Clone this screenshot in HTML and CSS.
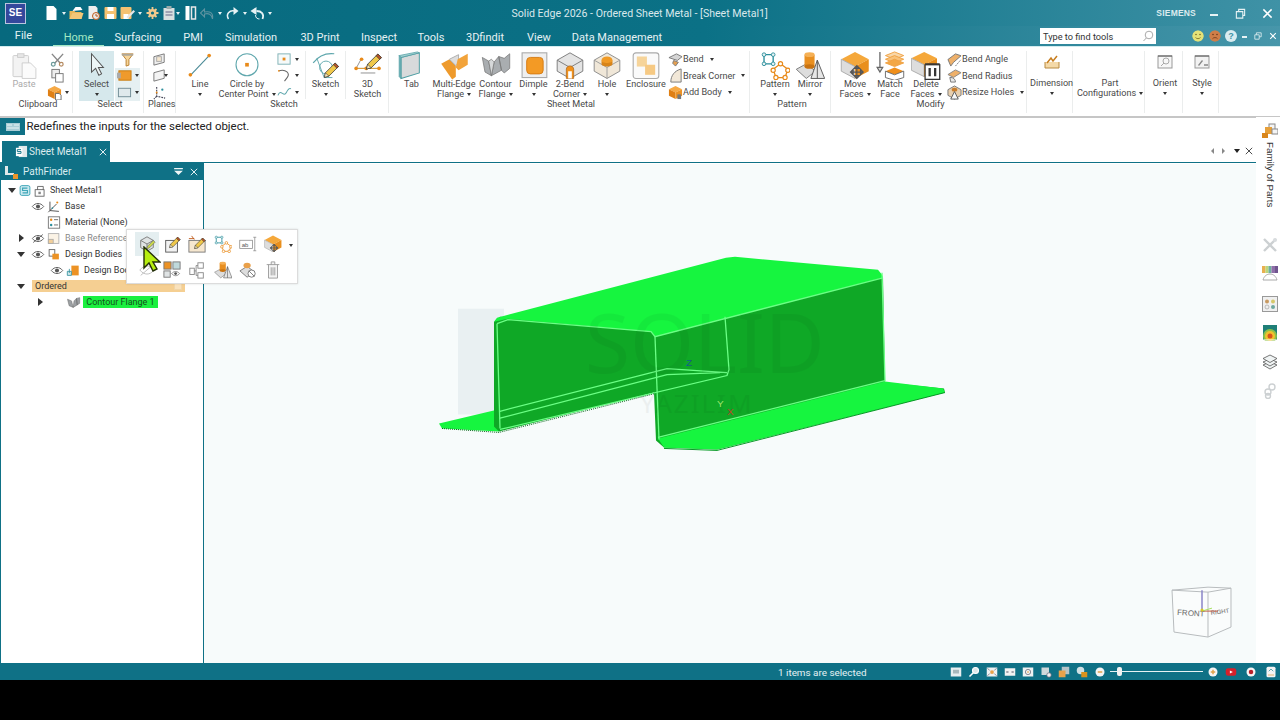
FILE: index.html
```html
<!DOCTYPE html>
<html lang="en">
<head>
<meta charset="utf-8">
<title>Solid Edge 2026 - Ordered Sheet Metal - [Sheet Metal1]</title>
<link rel="stylesheet" href="styles.css">
</head>
<body>
<svg class="defs" xmlns="http://www.w3.org/2000/svg">
  <symbol id="paste" viewBox="0 0 32 32"><rect x="4" y="5" width="17" height="23" rx="1" fill="#f3f3f3" stroke="#ccc"/><rect x="9" y="3" width="7" height="4" fill="#e6e6e6" stroke="#ccc"/><path d="M14 13h9l6 6v11H14z" fill="#fbfbfb" stroke="#ccc"/></symbol>
  <symbol id="select" viewBox="0 0 32 32"><path d="M10 3V23l4.500-4 3.500 7.500 3-1.500-3.500-7H23z" fill="#eef6f7" stroke="#555" stroke-width="1.100"/></symbol>
  <symbol id="line" viewBox="0 0 32 32"><path d="M6 26 26 5" stroke="#4a8a96" stroke-width="1.200"/><circle cx="5.500" cy="26" r="2" fill="#e88a1a"/><circle cx="26" cy="5" r="2" fill="#e88a1a"/></symbol>
  <symbol id="circle" viewBox="0 0 32 32"><circle cx="16" cy="15" r="12" fill="none" stroke="#5fa7ad" stroke-width="1.200"/><rect x="14" y="13" width="4" height="4" fill="#e88a1a"/></symbol>
  <symbol id="pencil" viewBox="0 0 32 32"><path d="M5 30l2-8L24 5l6 6-17 17z" fill="#f0c84a" stroke="#333" stroke-width="1.300"/><path d="M24 5l6 6-3 3-6-6z" fill="#b5552a" stroke="#333"/><path d="M5 30l2-8 6 6z" fill="#f6e6b8" stroke="#333"/></symbol>
  <symbol id="sketch" viewBox="0 0 32 32"><path d="M2 13C8 5 16 2 25 3" fill="none" stroke="#5fa7ad" stroke-width="1.300"/><path d="M6 8l8 21h9" fill="none" stroke="#5fa7ad"/><circle cx="16" cy="18" r="7" fill="none" stroke="#5fa7ad"/><use href="#pencil" x="11" y="10" width="20" height="20"/></symbol>
  <symbol id="sketch3d" viewBox="0 0 32 32"><path d="M3 19H28M8 24H24M3 19l6-11" fill="none" stroke="#8a8a8a"/><path d="M3 19h25" stroke="#e0a030"/><circle cx="3" cy="19" r="2" fill="#e88a1a"/><circle cx="14" cy="19" r="2" fill="#e88a1a"/><circle cx="28" cy="19" r="2" fill="#e88a1a"/><circle cx="9" cy="9" r="2" fill="#e88a1a"/><use href="#pencil" x="11" y="0" width="21" height="21"/></symbol>
  <symbol id="tab" viewBox="0 0 32 32"><path d="M4 7 24 2V24L4 30z" fill="#d8dadb" stroke="#4f9ea3" stroke-width="1.100"/><path d="M4 7 2 5 22 1l2 1z" fill="#a8d3d4" stroke="#4f9ea3" stroke-width=".8"/><path d="M4 7 2 5V28l2 2z" fill="#6fb3b7" stroke="#4f9ea3" stroke-width=".8"/></symbol>
  <symbol id="multiedge" viewBox="0 0 32 32"><path d="M2 14 11 9l7 7v12l-4 3z" fill="#ee9a2c"/><path d="M11 9l10-5v9l-3 3z" fill="#ddd" stroke="#aaa"/><path d="M20 9l11-6V15l-10 6-3-3z" fill="#f2a33a"/></symbol>
  <symbol id="contour" viewBox="0 0 32 32"><path d="M1 7 8 11l3 16-7-4zM11 27l3-15 5-6 3 15zM19 6l3 15 3 3 6-5V3l-6 5z" fill="#a9adb0" stroke="#777" stroke-width=".8"/><path d="M8 11l3 16 3-15-3-3z" fill="#d6d8d9" stroke="#777" stroke-width=".8"/></symbol>
  <symbol id="dimple" viewBox="0 0 32 32"><rect x="3" y="2" width="27" height="27" fill="#efefef" stroke="#aaa" stroke-width="1.200"/><rect x="8" y="7" width="18" height="18" rx="4" fill="#f39a25" stroke="#d47a10"/></symbol>
  <symbol id="twobend" viewBox="0 0 32 32"><path d="M16 2 30 10V22L16 30 2 22V10z" fill="#e4e4e4" stroke="#777"/><path d="M2 10 16 18 30 10M16 18V30" fill="none" stroke="#777"/><path d="M12 30V20c0-5 8-5 8 0V30z" fill="#f0911c" stroke="#a65c10" stroke-width=".7"/><path d="M14 30V22h4v8z" fill="#fff"/></symbol>
  <symbol id="hole" viewBox="0 0 32 32"><path d="M16 2 30 10V22L16 30 2 22V10z" fill="#f0e7d8" stroke="#888"/><path d="M2 10 16 18 30 10M16 18V30" fill="none" stroke="#999"/><ellipse cx="16" cy="10" rx="6" ry="4" fill="#f09a25"/><path d="M10 10v4c0 4 12 4 12 0v-4c0 4-12 4-12 0" fill="#d88418"/></symbol>
  <symbol id="enclosure" viewBox="0 0 32 32"><rect x="2" y="2" width="28" height="28" rx="3" fill="#fafafa" stroke="#aaa" stroke-width="1.200"/><rect x="6" y="6" width="11" height="11" fill="#f6d49a"/><rect x="15" y="15" width="11" height="11" fill="#f6c983"/></symbol>
  <symbol id="pattern" viewBox="0 0 32 32"><path d="M4 4h10v10H4z" fill="none" stroke="#2d8f9c" stroke-width="1.500"/><g fill="#e6f2f3" stroke="#2d8f9c"><circle cx="4" cy="4" r="2"/><circle cx="14" cy="4" r="2"/><circle cx="4" cy="14" r="2"/><circle cx="14" cy="14" r="2"/></g><path d="M22 14 30 20 27 29H17L14 20z" fill="none" stroke="#e88a1a" stroke-width="1.400"/><g fill="#fff" stroke="#e88a1a" stroke-width="1.300"><circle cx="22" cy="14" r="2.300"/><circle cx="30" cy="21" r="2.300"/><circle cx="27" cy="29" r="2.300"/><circle cx="17" cy="29" r="2.300"/><circle cx="14" cy="21" r="2.300"/></g></symbol>
  <symbol id="mirror" viewBox="0 0 32 32"><path d="M1 20 12 14 22 22 12 30z" fill="#ddd" stroke="#777"/><rect x="10" y="4" width="11" height="13" fill="#e88f20"/><ellipse cx="15.500" cy="4" rx="5.500" ry="2.500" fill="#f5b055"/><ellipse cx="15.500" cy="17" rx="5.500" ry="2.500" fill="#c97310"/><path d="M24 10 17 30h15z" fill="#e6e6e6" stroke="#555"/><path d="M24 10V30" stroke="#555"/></symbol>
  <symbol id="move" viewBox="0 0 32 32"><path d="M16 1 31 9 16 17 1 9z" fill="#f5a83b"/><path d="M1 9 16 17V30L1 22z" fill="#ddd" stroke="#aaa"/><path d="M31 9 16 17V30L31 22z" fill="#e98f1d"/><path d="M18 16v14M11 23h14M18 16l-3 3h6zM18 30l-3-3h6zM11 23l3-3v6zM25 23l-3-3v6z" stroke="#555" fill="#777" stroke-width="1.300"/></symbol>
  <symbol id="match" viewBox="0 0 32 32"><path d="M5 1V18M2 18h6l-3 5z" stroke="#666" fill="#ddd" stroke-width="1.400"/><g fill="none" stroke="#f0a040"><path d="M21 1 31 5 21 9 11 5z" fill="#f9d7a8"/><path d="M21 5 31 9 21 13 11 9z" fill="#f8c27a"/><path d="M21 9 31 13 21 17 11 13z" fill="#f3a745"/></g><path d="M21 18 31 22 21 26 11 22z" fill="#f08f1b"/><path d="M11 22V29l10 3 10-3V22L21 26z" fill="#fff" stroke="#666"/></symbol>
  <symbol id="deletef" viewBox="0 0 32 32"><path d="M14 1 28 8 14 15 0 8z" fill="#f5a83b"/><path d="M0 8 14 15V28L0 21z" fill="#ddd" stroke="#aaa"/><path d="M28 8 14 15V28L28 21z" fill="#e98f1d"/><rect x="15" y="15" width="16" height="16" fill="#fff" stroke="#333" stroke-width="1.400"/><path d="M20 18.500V27.500M26 18.500V27.500" stroke="#333" stroke-width="2.500"/><path d="M15 14h16" stroke="#333" stroke-width="1.500"/></symbol>

  <symbol id="scissors" viewBox="0 0 16 16"><path d="M2 2l9 10M14 2 5 12" stroke="#888" stroke-width="1.500"/><circle cx="3.500" cy="13" r="2" fill="none" stroke="#6a9a9a" stroke-width="1.300"/><circle cx="12" cy="13" r="2" fill="none" stroke="#b58a60" stroke-width="1.300"/></symbol>
  <symbol id="copy" viewBox="0 0 16 16"><rect x="2" y="1.500" width="8" height="9" fill="#eee" stroke="#777"/><rect x="6" y="6" width="8" height="9" fill="#fff" stroke="#777"/></symbol>
  <symbol id="cube" viewBox="0 0 16 16"><path d="M8 1l7 3.500-7 3.500-7-3.500z" fill="#f6a945"/><path d="M1 4.500 8 8v7l-7-3.500z" fill="#df7f14"/><path d="M15 4.500 8 8v7l7-3.500z" fill="#ec9224"/></symbol>
  <symbol id="cubedoc" viewBox="0 0 16 16"><use href="#cube"/><path d="M9 9h4l2 2v5H9z" fill="#fff" stroke="#666"/></symbol>
  <symbol id="funnel" viewBox="0 0 16 16"><path d="M2 2h12L9.500 8v6L6.500 15V8z" fill="#f7d59a" stroke="#b77e2d"/><path d="M2 2h12v2H2z" fill="#b0a898"/></symbol>
  <symbol id="selorange" viewBox="0 0 16 16"><rect x="2" y="3" width="13" height="10" fill="#ef9a2c" stroke="#c97c10"/><rect x="0" y="5" width="4" height="6" fill="#aaa"/></symbol>
  <symbol id="rectsel" viewBox="0 0 16 16"><rect x="1.500" y="3.500" width="13" height="9" fill="#dfe9ec" stroke="#718c96"/></symbol>
  <symbol id="plane1" viewBox="0 0 16 16"><path d="M2 5 13 2v9L2 14z" fill="#eee" stroke="#777"/><rect x="5" y="5" width="5" height="5" fill="#f5e7d0" stroke="#aaa"/></symbol>
  <symbol id="plane2" viewBox="0 0 16 16"><path d="M2 5 13 2v9L2 14z" fill="#f4f4f4" stroke="#777"/></symbol>
  <symbol id="axes" viewBox="0 0 16 16"><path d="M5 2v10l9 2M5 12l-3 3" fill="none" stroke="#445" stroke-width="1.200" stroke-dasharray="2 1"/><circle cx="5" cy="8" r="1" fill="#e88a1a"/><circle cx="11" cy="5" r="1.200" fill="#2d8f9c"/></symbol>
  <symbol id="sk1" viewBox="0 0 16 16"><rect x="1" y="2" width="13" height="11" fill="#f5fafa" stroke="#7fb0b5"/><rect x="6" y="6" width="3" height="3" fill="#e88a1a"/></symbol>
  <symbol id="sk2" viewBox="0 0 16 16"><path d="M2 3c8-2 12 3 9 7l-3 4" fill="none" stroke="#666" stroke-width="1.100"/><circle cx="2" cy="3" r="1" fill="#e88a1a"/></symbol>
  <symbol id="sk3" viewBox="0 0 16 16"><path d="M1 11c3-8 6 3 9-3s4-4 5-4" fill="none" stroke="#5fa7ad" stroke-width="1.100"/></symbol>
  <symbol id="bend" viewBox="0 0 16 16"><path d="M1 6 9 2l6 3-5 4z" fill="#d5d5d5" stroke="#777"/><path d="M6 9l5 2-3 4-3-3z" fill="#e6a050" stroke="#777"/></symbol>
  <symbol id="breakc" viewBox="0 0 16 16"><path d="M3 15C3 8 7 3 14 1V15z" fill="#f2e8d8" stroke="#777"/></symbol>
  <symbol id="addbody" viewBox="0 0 16 16"><use href="#cube"/><path d="M10 10h4v5h-4z" fill="#777"/></symbol>
  <symbol id="bangle" viewBox="0 0 16 16"><path d="M1 8 9 2l6 2-8 7-3 4z" fill="#eeb06a" stroke="#777"/><path d="M9 15 15 8" stroke="#777" stroke-dasharray="2 1"/></symbol>
  <symbol id="bradius" viewBox="0 0 16 16"><path d="M1 7 9 2l6 3-8 5z" fill="#eeb06a" stroke="#888"/><path d="M3 10c4 0 6 2 6 5H4z" fill="#e8e8e8" stroke="#777"/></symbol>
  <symbol id="rholes" viewBox="0 0 16 16"><path d="M8 1 15 5v6L8 15 1 11V5z" fill="#e8cfae" stroke="#777"/><ellipse cx="8" cy="5" rx="3" ry="2" fill="#c97d2b"/><path d="M8 7 4 15h8z" fill="#f7f7f7" stroke="#555"/></symbol>
  <symbol id="dimension" viewBox="0 0 16 16"><path d="M1 8v6h14V8" fill="#f4d9a8" stroke="#b98a40"/><path d="M3 9l4-5 2 3 4-5" fill="none" stroke="#c77d1e" stroke-width="1.500"/></symbol>
  <symbol id="orient" viewBox="0 0 16 16"><rect x="1" y="2" width="14" height="12" fill="#f7f7f7" stroke="#999"/><path d="M1 2h14" stroke="#555"/><circle cx="9" cy="7" r="3" fill="none" stroke="#aaa"/><path d="M7 9 4 12" stroke="#aaa"/></symbol>
  <symbol id="style" viewBox="0 0 16 16"><rect x="1" y="2" width="14" height="12" fill="#f2f2f2" stroke="#999"/><path d="M1 2h14" stroke="#555"/><path d="M4 11l4-5 1 1-4 5z" fill="#888"/><path d="M10 11h4" stroke="#555"/></symbol>

  <symbol id="q-doc" viewBox="0 0 16 16"><path d="M3 1h7l3 3v11H3z" fill="#fff"/></symbol>
  <symbol id="q-open" viewBox="0 0 16 16"><path d="M1 6h5l1 1h6v7H1z" fill="#e9b75a"/><path d="M4 6 7 2h5l2 3" fill="#fff"/><path d="M1 14l3-6h11l-2 6z" fill="#f3c778"/></symbol>
  <symbol id="q-clock" viewBox="0 0 16 16"><path d="M3 1h7l2 2v11H3z" fill="#eee"/><circle cx="10.500" cy="11" r="3.500" fill="#e8e8e8" stroke="#c05a1a"/><path d="M10.500 9v2h2" stroke="#c05a1a" fill="none"/></symbol>
  <symbol id="q-save" viewBox="0 0 16 16"><rect x="2" y="2" width="12" height="12" rx="1" fill="#f5c271"/><rect x="5" y="2" width="6" height="4" fill="#fff"/><rect x="4.500" y="9" width="7" height="5" fill="#fff"/></symbol>
  <symbol id="q-saveas" viewBox="0 0 16 16"><rect x="1" y="2" width="11" height="12" rx="1" fill="#f5c271"/><rect x="4" y="9" width="5" height="5" fill="#fff"/><path d="M7 12l7-7 1.500 1.500-7 7z" fill="#e8e8e8"/></symbol>
  <symbol id="q-gear" viewBox="0 0 16 16"><path d="M8 2v12M2 8h12M4 4l8 8M12 4l-8 8" stroke="#f2c98c" stroke-width="1.800"/><circle cx="8" cy="8" r="4" fill="#f2c98c"/><circle cx="8" cy="8" r="1.600" fill="#0b6f83"/></symbol>
  <symbol id="q-clip" viewBox="0 0 16 16"><rect x="2" y="3" width="11" height="12" fill="#d8e0e0"/><rect x="5" y="1" width="5" height="3" fill="#9aa"/><path d="M4 7h7M4 10h7" stroke="#668"/></symbol>
  <symbol id="q-door" viewBox="0 0 16 16"><path d="M3 1h4v14H3z" fill="#fff"/><path d="M9 2h4v12H9z" fill="none" stroke="#e8e8e8" stroke-width="1.500"/></symbol>
  <symbol id="q-undo" viewBox="0 0 16 16"><path d="M13 14c1-6-2-8-8-7V4L1 8l4 4V9c4-1 7 0 8 5z" fill="none" stroke="#5e93a0" stroke-width="1.100"/></symbol>
  <symbol id="q-redo" viewBox="0 0 16 16"><path d="M4 14C1 9 5 5 10 6" fill="none" stroke="#e6f2f4" stroke-width="1.500"/><path d="M9 2l5 4-5 4z" fill="#e6f2f4"/></symbol>
  <symbol id="q-undo2" viewBox="0 0 16 16"><path d="M13 14c2-5-1-8-6-8" fill="none" stroke="#e6f2f4" stroke-width="1.800"/><path d="M7 2 1 6l6 4z" fill="#e6f2f4"/><path d="M6 10c0 3 2 4 4 4" fill="none" stroke="#e6f2f4"/></symbol>

  <symbol id="eye" viewBox="0 0 16 16"><path d="M1 8c4-5 10-5 14 0-4 5-10 5-14 0z" fill="#fff" stroke="#555" stroke-width="1.100"/><circle cx="8" cy="8" r="2.500" fill="#555"/></symbol>
  <symbol id="eyeoff" viewBox="0 0 16 16"><use href="#eye"/><path d="M2 13 14 3" stroke="#555"/></symbol>
  <symbol id="tree-s" viewBox="0 0 16 16"><rect x="2" y="2" width="12" height="12" rx="2" fill="#cdeaf0" stroke="#3fa6b8" stroke-width="1.200"/><path d="M11 5H5v3h6v3H5" fill="none" stroke="#3fa6b8" stroke-width="1.400"/></symbol>
  <symbol id="tree-lock" viewBox="0 0 16 16"><rect x="2" y="7" width="11" height="8" fill="#fff" stroke="#555"/><path d="M5 7V3h7v4" fill="none" stroke="#555"/><rect x="6" y="9.500" width="3" height="3" fill="#888"/></symbol>
  <symbol id="tree-base" viewBox="0 0 16 16"><path d="M3 2v11l11 1M3 13 1 15M3 13 11 5" fill="none" stroke="#444" stroke-width="1.100"/><circle cx="12" cy="3" r="1.300" fill="#e88a1a"/><circle cx="6" cy="10" r="1" fill="#2d8f9c"/></symbol>
  <symbol id="tree-mat" viewBox="0 0 16 16"><rect x="1" y="1" width="14" height="14" fill="#fff" stroke="#666"/><circle cx="4.500" cy="4.500" r="1.500" fill="#e88a1a"/><circle cx="4.500" cy="11" r="1.500" fill="#2d8f9c"/><path d="M8 4.500h5M8 11h5" stroke="#555"/></symbol>
  <symbol id="tree-ref" viewBox="0 0 16 16"><rect x="1" y="2" width="13" height="12" fill="#fbf3e6" stroke="#aaa"/><rect x="1" y="9" width="6" height="5" fill="#f2cf9a" stroke="#aaa"/></symbol>
  <symbol id="tree-bodies" viewBox="0 0 16 16"><rect x="2" y="2" width="7" height="8" fill="#fff" stroke="#555"/><rect x="6" y="7" width="8" height="7" fill="#ec9224"/></symbol>
  <symbol id="tree-body" viewBox="0 0 16 16"><rect x="6" y="2" width="9" height="12" fill="#ec9224"/><path d="M1 9h5v5H1z" fill="#cfe7ea" stroke="#2d8f9c"/><path d="M3.500 6v5M1 8" stroke="#2d8f9c"/></symbol>
  <symbol id="tree-flange" viewBox="0 0 16 16"><path d="M0 4 5 6l2 8-5-2zM7 14l1-8 3-3 1 8zM11 3l1 8 3-2V2z" fill="#9ca0a3" stroke="#666" stroke-width=".6"/></symbol>

  <symbol id="m-edit" viewBox="0 0 20 20"><path d="M3 6 10 2l7 4v8l-7 4-7-4z" fill="#dfe3e4" stroke="#777"/><path d="M3 6l7 4 7-4M10 10v8" fill="none" stroke="#777"/><path d="M9 16l2-4 6-6 2 2-6 6z" fill="#c9d84a" stroke="#666" stroke-width=".7"/></symbol>
  <symbol id="m-sketch" viewBox="0 0 20 20"><rect x="3" y="6" width="13" height="13" fill="#f2f2f2" stroke="#555"/><use href="#pencil" x="5" y="0" width="15" height="15"/></symbol>
  <symbol id="m-dyn" viewBox="0 0 20 20"><rect x="1" y="6" width="18" height="13" fill="#f6e7cf" stroke="#777"/><path d="M1 4h6M4 1l3 4" stroke="#c05a1a"/><use href="#pencil" x="5" y="1" width="15" height="15"/></symbol>
  <symbol id="m-pat" viewBox="0 0 20 20"><use href="#pattern"/></symbol>
  <symbol id="m-ab" viewBox="0 0 24 20"><rect x="1" y="5" width="17" height="11" fill="#fff" stroke="#888"/><text x="3.500" y="14" class="m-abtxt">ab</text><path d="M21 1v18M19 1h4M19 19h4" stroke="#888"/></symbol>
  <symbol id="m-move" viewBox="0 0 20 20"><use href="#move"/></symbol>
  <symbol id="m-hide" viewBox="0 0 20 20"><path d="M2 10c5-6 11-6 16 0-5 6-11 6-16 0z" fill="none" stroke="#bbb"/><path d="M3 16 17 4" stroke="#bbb"/></symbol>
  <symbol id="m-show" viewBox="0 0 20 20"><rect x="1" y="1" width="8" height="8" fill="#ec9224" stroke="#777"/><rect x="11" y="1" width="8" height="8" fill="#bfd9dc" stroke="#777"/><rect x="1" y="11" width="7" height="7" fill="#dfe3e4" stroke="#777"/><use href="#eye" x="8" y="9" width="12" height="10"/></symbol>
  <symbol id="m-rel" viewBox="0 0 20 20"><rect x="2" y="8" width="5" height="7" fill="#fff" stroke="#888"/><rect x="11" y="2" width="6" height="6" fill="#fff" stroke="#888"/><rect x="11" y="13" width="6" height="6" fill="#fff" stroke="#888"/><path d="M7 11h2V5h2M9 11v5h2" fill="none" stroke="#888"/></symbol>
  <symbol id="m-mirror" viewBox="0 0 20 20"><use href="#mirror"/></symbol>
  <symbol id="m-sup" viewBox="0 0 20 20"><path d="M1 11 9 6l8 6-8 6z" fill="#ddd" stroke="#777"/><ellipse cx="9" cy="5" rx="4" ry="3" fill="#e9a04a"/><circle cx="14" cy="14" r="4" fill="#fff" stroke="#777"/><path d="M11 11l6 6" stroke="#777"/></symbol>
  <symbol id="m-del" viewBox="0 0 20 20"><path d="M3 4h14M5 4v15h10V4M8 4V1h4v3" fill="#f4f4f4" stroke="#999"/><path d="M8 7v9M10 7v9M12 7v9" stroke="#999"/></symbol>

  <symbol id="r-tools" viewBox="0 0 16 16"><path d="M2 14 14 2M2 2l12 12" stroke="#ccd0d2" stroke-width="2.400"/><circle cx="13" cy="3" r="2" fill="#d8dcde"/></symbol>
  <symbol id="r-rain" viewBox="0 0 16 16"><rect x="0" y="0" width="3.500" height="7" fill="#e8b050"/><rect x="3.500" y="0" width="3" height="7" fill="#bcd57a"/><rect x="6.500" y="0" width="3" height="7" fill="#6fb0a0"/><rect x="9.500" y="0" width="3.500" height="7" fill="#8f6fa8"/><rect x="13" y="0" width="3" height="7" fill="#70558f"/><path d="M1 14c2-8 12-8 14 0z" fill="#fff" stroke="#aaa"/></symbol>
  <symbol id="r-grid" viewBox="0 0 16 16"><rect x=".5" y=".5" width="15" height="15" fill="#f0f0f0" stroke="#999"/><circle cx="5" cy="5.500" r="2" fill="#c89a62"/><circle cx="11" cy="5.500" r="2" fill="#d6c86a"/><circle cx="5" cy="11" r="2" fill="#eee" stroke="#999" stroke-width=".6"/><circle cx="11" cy="11" r="2" fill="#6fa8a0"/></symbol>
  <symbol id="r-heat" viewBox="0 0 16 16"><rect x="1" y="0" width="14" height="15" fill="#1f7f78"/><circle cx="8" cy="11" r="7" fill="#8ec24a"/><circle cx="8" cy="11" r="5" fill="#f2c030"/><circle cx="8" cy="11" r="2.500" fill="#d9541e"/><path d="M1 15h14" stroke="#fff"/></symbol>
  <symbol id="r-stack" viewBox="0 0 16 16"><g fill="#f0f4f4" stroke="#555" stroke-width=".8"><path d="M8 8l7 3-7 4-7-4z"/><path d="M8 5l7 3-7 4-7-4z"/><path d="M8 1l7 3.500-7 4-7-4z"/></g></symbol>
  <symbol id="r-chain" viewBox="0 0 16 16"><g fill="none" stroke="#ccd0d2" stroke-width="1.400"><circle cx="10" cy="4" r="3"/><circle cx="6" cy="9" r="3"/><circle cx="6" cy="13" r="2.500"/></g></symbol>
  <symbol id="r-family" viewBox="0 0 16 16"><rect x="7" y="1" width="6" height="6" fill="#f4f4f4" stroke="#888"/><rect x="3" y="4" width="7" height="7" fill="#e6a03a"/><rect x="10" y="6" width="6" height="5" fill="#f4f4f4" stroke="#888"/><rect x="0" y="10" width="6" height="5" fill="#d9861c"/></symbol>

  <symbol id="f-happy" viewBox="0 0 12 12"><circle cx="6" cy="6" r="5.800" fill="#e3e278"/><circle cx="4" cy="4.500" r=".8" fill="#7a6a20"/><circle cx="8" cy="4.500" r=".8" fill="#7a6a20"/><path d="M3.500 7.500c1 1.500 4 1.500 5 0" fill="none" stroke="#7a6a20" stroke-width=".8"/></symbol>
  <symbol id="f-sad" viewBox="0 0 12 12"><circle cx="6" cy="6" r="5.800" fill="#cf7e48"/><circle cx="4" cy="4.500" r=".8" fill="#70381a"/><circle cx="8" cy="4.500" r=".8" fill="#70381a"/><path d="M3.500 8.700c1-1.500 4-1.500 5 0" fill="none" stroke="#70381a" stroke-width=".8"/></symbol>

  <symbol id="s-view" viewBox="0 0 16 16"><rect x="1" y="2" width="14" height="12" fill="#e8eef0"/><rect x="4" y="5" width="8" height="5" fill="#a8b8bc"/></symbol>
  <symbol id="s-zoom" viewBox="0 0 16 16"><circle cx="10" cy="6" r="4" fill="#dfe8ea" stroke="#fff" stroke-width="1.500"/><path d="M7 9l-5 5" stroke="#fff" stroke-width="2.200"/></symbol>
  <symbol id="s-fit" viewBox="0 0 16 16"><rect x="1" y="2" width="14" height="12" fill="#eef2f2"/><circle cx="8" cy="8" r="2.500" fill="#e8a24a"/><path d="M2 3l3 3M14 3l-3 3M2 13l3-3M14 13l-3-3" stroke="#667"/></symbol>
  <symbol id="s-flat" viewBox="0 0 16 16"><rect x="1" y="3" width="14" height="10" fill="#f2f2f2"/><path d="M3 8h3M10 8h3" stroke="#556" stroke-width="1.500"/></symbol>
  <symbol id="s-rot" viewBox="0 0 16 16"><rect x="1" y="2" width="14" height="12" fill="#eef2f2"/><circle cx="8" cy="8" r="3.500" fill="none" stroke="#667"/><circle cx="8" cy="8" r="1" fill="#e88a1a"/></symbol>
  <symbol id="s-look" viewBox="0 0 16 16"><rect x="2" y="2" width="10" height="10" fill="#cfd8da"/><circle cx="12" cy="12" r="3" fill="#f0f0f0" stroke="#667"/></symbol>
  <symbol id="s-pan" viewBox="0 0 16 16"><rect x="5" y="1" width="10" height="10" fill="#b5c4c8"/><rect x="1" y="6" width="9" height="9" fill="#e8a24a"/></symbol>
  <symbol id="s-glob" viewBox="0 0 16 16"><circle cx="6" cy="6" r="5" fill="#cfe0e4"/><rect x="7" y="8" width="8" height="7" fill="#d9921e"/></symbol>
  <symbol id="s-minus" viewBox="0 0 16 16"><circle cx="8" cy="8" r="6" fill="#f4f4f4"/><path d="M5 8h6" stroke="#e0a24a" stroke-width="2"/></symbol>
  <symbol id="s-plus" viewBox="0 0 16 16"><circle cx="8" cy="8" r="6" fill="#f4f4f4"/><path d="M5 8h6M8 5v6" stroke="#e0a24a" stroke-width="2"/></symbol>
  <symbol id="s-yt" viewBox="0 0 16 16"><rect x="1" y="3" width="14" height="10" rx="3" fill="#d6202a"/><path d="M6.500 6l4 2-4 2z" fill="#fff"/></symbol>
  <symbol id="s-rec" viewBox="0 0 16 16"><circle cx="8" cy="8" r="6" fill="#f4f4f4"/><circle cx="8" cy="8" r="3" fill="#b8202a"/></symbol>
  <symbol id="s-up" viewBox="0 0 16 16"><rect x="2" y="1" width="12" height="14" rx="2" fill="#f4f4f4"/><path d="M5 7l3-3 3 3" fill="none" stroke="#2d8f9c"/><path d="M4 12h8" stroke="#e0a24a"/></symbol>
</svg>

<div class="app">
  <header class="titlebar">
    <div class="logo">SE</div>
    <div class="qat">
      <svg class="q"><use href="#q-doc"/></svg><i class="caret-w"></i>
      <svg class="q"><use href="#q-open"/></svg>
      <svg class="q"><use href="#q-clock"/></svg>
      <svg class="q"><use href="#q-save"/></svg>
      <svg class="q"><use href="#q-saveas"/></svg><i class="caret-w"></i>
      <svg class="q"><use href="#q-gear"/></svg>
      <svg class="q"><use href="#q-clip"/></svg><i class="caret-w tight"></i>
      <svg class="q"><use href="#q-door"/></svg>
      <svg class="q"><use href="#q-undo"/></svg><i class="caret-w"></i>
      <svg class="q"><use href="#q-redo"/></svg><i class="caret-w"></i>
      <svg class="q"><use href="#q-undo2"/></svg><i class="caret-w"></i>
    </div>
    <div class="doc-title">Solid Edge 2026 - Ordered Sheet Metal - [Sheet Metal1]</div>
    <div class="win-group">
      <span class="siemens">SIEMENS</span>
      <span class="win win-min"></span>
      <svg class="win-restore" viewBox="0 0 12 12"><path d="M1.500 4h7v7h-7zM4 4V1.500h6.500V8H8.500" fill="none" stroke="#e6f2f4" stroke-width="1.200"/></svg>
      <svg class="win-close" viewBox="0 0 12 12"><path d="M1.500 1.500l9 9M10.500 1.500l-9 9" stroke="#fff" stroke-width="1.600"/></svg>
    </div>
  </header>

  <nav class="tabbar">
    <span class="tab tab-file">File</span>
    <span class="tab tab-home">Home</span>
    <span class="tab t-surf">Surfacing</span>
    <span class="tab t-pmi">PMI</span>
    <span class="tab t-sim">Simulation</span>
    <span class="tab t-3d">3D Print</span>
    <span class="tab t-insp">Inspect</span>
    <span class="tab t-tools">Tools</span>
    <span class="tab t-find">3Dfindit</span>
    <span class="tab t-view">View</span>
    <span class="tab t-dm">Data Management</span>
    <div class="tab-right">
      <div class="search"><span>Type to find tools</span>
        <svg class="search-ico" viewBox="0 0 12 12"><circle cx="7" cy="5" r="3.800" fill="none" stroke="#aaa"/><path d="M4.300 8 1.500 11" stroke="#aaa"/></svg></div>
      <svg class="face face-y"><use href="#f-happy"/></svg>
      <svg class="face face-o"><use href="#f-sad"/></svg>
      <span class="help">?</span>
      <span class="mini-min"></span>
      <svg class="mini" viewBox="0 0 10 10"><path d="M1 3.500h5.500V9H1zM3 3.500V1h6v5H6.500" fill="none" stroke="#e6f2f4"/></svg>
      <svg class="mini" viewBox="0 0 10 10"><path d="M1.500 1.500l7 7M8.500 1.500l-7 7" stroke="#fff" stroke-width="1.300"/></svg>
    </div>
  </nav>

  <section class="ribbon">
    <div class="group g-clip">
      <div class="items">
        <div class="lg w36 ml6 muted"><svg class="ico"><use href="#paste"/></svg><span>Paste</span></div>
        <div class="col w31">
          <div class="sm"><svg class="s"><use href="#scissors"/></svg></div>
          <div class="sm"><svg class="s"><use href="#copy"/></svg></div>
          <div class="sm"><svg class="s"><use href="#cubedoc"/></svg><i class="caret"></i></div>
        </div>
      </div>
      <div class="glabel">Clipboard</div>
    </div>
    <div class="group g-sel">
      <div class="items">
        <div class="lg w36 ml6 sel-on"><svg class="ico"><use href="#select"/></svg><span>Select</span><i class="caret"></i></div>
        <div class="col w25">
          <div class="sm"><svg class="s"><use href="#funnel"/></svg></div>
          <div class="sm on"><svg class="s"><use href="#selorange"/></svg><i class="caret"></i></div>
          <div class="sm on"><svg class="s"><use href="#rectsel"/></svg><i class="caret"></i></div>
        </div>
      </div>
      <div class="glabel">Select</div>
    </div>
    <div class="group g-planes">
      <div class="items">
        <div class="col w31">
          <div class="sm"><svg class="s"><use href="#plane1"/></svg></div>
          <div class="sm"><svg class="s"><use href="#plane2"/></svg><i class="caret tiny"></i></div>
          <div class="sm"><svg class="s"><use href="#axes"/></svg></div>
        </div>
      </div>
      <div class="glabel">Planes</div>
    </div>
    <div class="group g-sketch">
      <div class="items">
        <div class="lg w48"><svg class="ico"><use href="#line"/></svg><span>Line</span><i class="caret"></i></div>
        <div class="lg w46"><svg class="ico"><use href="#circle"/></svg><span>Circle by</span><span>Center Point <i class="caret in"></i></span></div>
        <div class="col w36 sub">
          <div class="sm"><svg class="s"><use href="#sk1"/></svg><i class="caret"></i></div>
          <div class="sm"><svg class="s"><use href="#sk2"/></svg><i class="caret"></i></div>
          <div class="sm"><svg class="s"><use href="#sk3"/></svg><i class="caret"></i></div>
        </div>
        <div class="lg w40 sub"><svg class="ico"><use href="#sketch"/></svg><span>Sketch</span><i class="caret"></i></div>
        <div class="lg w43"><svg class="ico"><use href="#sketch3d"/></svg><span>3D</span><span>Sketch</span></div>
      </div>
      <div class="glabel">Sketch</div>
    </div>
    <div class="group g-sheet">
      <div class="items">
        <div class="lg w45"><svg class="ico"><use href="#tab"/></svg><span>Tab</span></div>
        <div class="lg w40"><svg class="ico"><use href="#multiedge"/></svg><span>Multi-Edge</span><span>Flange <i class="caret in"></i></span></div>
        <div class="lg w43"><svg class="ico"><use href="#contour"/></svg><span>Contour</span><span>Flange <i class="caret in"></i></span></div>
        <div class="lg w33"><svg class="ico"><use href="#dimple"/></svg><span>Dimple</span><i class="caret"></i></div>
        <div class="lg w40"><svg class="ico"><use href="#twobend"/></svg><span>2-Bend</span><span>Corner <i class="caret in"></i></span></div>
        <div class="lg w34"><svg class="ico"><use href="#hole"/></svg><span>Hole</span><i class="caret"></i></div>
        <div class="lg w44"><svg class="ico"><use href="#enclosure"/></svg><span>Enclosure</span></div>
        <div class="col grow">
          <div class="sm txt"><svg class="s"><use href="#bend"/></svg><span>Bend</span><i class="caret gap"></i></div>
          <div class="sm txt"><svg class="s"><use href="#breakc"/></svg><span>Break Corner</span><i class="caret gap"></i></div>
          <div class="sm txt"><svg class="s"><use href="#addbody"/></svg><span>Add Body</span><i class="caret gap"></i></div>
        </div>
      </div>
      <div class="glabel">Sheet Metal</div>
    </div>
    <div class="group g-pat">
      <div class="items">
        <div class="lg w42 ml4"><svg class="ico"><use href="#pattern"/></svg><span>Pattern</span><i class="caret"></i></div>
        <div class="lg w28"><svg class="ico"><use href="#mirror"/></svg><span>Mirror</span><i class="caret"></i></div>
      </div>
      <div class="glabel">Pattern</div>
    </div>
    <div class="group g-mod">
      <div class="items">
        <div class="lg w40 ml4"><svg class="ico"><use href="#move"/></svg><span>Move</span><span>Faces <i class="caret in"></i></span></div>
        <div class="lg w30"><svg class="ico"><use href="#match"/></svg><span>Match</span><span>Face</span></div>
        <div class="lg w42"><svg class="ico"><use href="#deletef"/></svg><span>Delete</span><span>Faces <i class="caret in"></i></span></div>
        <div class="col grow">
          <div class="sm txt"><svg class="s"><use href="#bangle"/></svg><span>Bend Angle</span></div>
          <div class="sm txt"><svg class="s"><use href="#bradius"/></svg><span>Bend Radius</span></div>
          <div class="sm txt"><svg class="s"><use href="#rholes"/></svg><span>Resize Holes</span><i class="caret gap"></i></div>
        </div>
      </div>
      <div class="glabel">Modify</div>
    </div>
    <div class="group g-dim tool"><div class="items"><div class="lg grow"><svg class="tool-ico"><use href="#dimension"/></svg><span>Dimension</span><i class="caret"></i></div></div></div>
    <div class="group g-part tool"><div class="items"><div class="lg grow"><div class="tool-gap"></div><span>Part</span><span>Configurations <i class="caret in"></i></span></div></div></div>
    <div class="group g-orient tool"><div class="items"><div class="lg grow"><svg class="tool-ico"><use href="#orient"/></svg><span>Orient</span><i class="caret"></i></div></div></div>
    <div class="group g-style tool"><div class="items"><div class="lg grow"><svg class="tool-ico"><use href="#style"/></svg><span>Style</span><i class="caret"></i></div></div></div>
  </section>

  <div class="prompt">
    <div class="prompt-ico"><svg viewBox="0 0 14 8"><rect width="14" height="8" fill="#a9cdd6"/><path d="M1 2h5M8 2h5M1 5h12" stroke="#e9f3f5"/></svg></div>
    <div class="prompt-text">Redefines the inputs for the selected object.</div>
  </div>

  <div class="docstrip">
    <div class="doctab">
      <svg class="doctab-ico" viewBox="0 0 14 14"><rect x="4" y="1" width="9" height="12" fill="#dfe8ea"/><rect x="1" y="3" width="7" height="9" fill="#fff"/><path d="M6.500 5H2.500v2h4v2h-4" fill="none" stroke="#0f7186"/></svg>
      <span>Sheet Metal1</span>
      <svg class="doctab-x" viewBox="0 0 10 10"><path d="M1 1l8 8M9 1 1 9" stroke="#fff" stroke-width="1.100"/></svg>
    </div>
    <div class="docnav">
      <i class="tri-l"></i><i class="tri-r"></i><i class="tri-d"></i>
      <svg class="docnav-x" viewBox="0 0 10 10"><path d="M1 1l8 8M9 1 1 9" stroke="#333" stroke-width="1.100"/></svg>
    </div>
  </div>

  <main class="main">
    <aside class="pathfinder">
      <div class="pf-head">
        <svg class="pf-ico" viewBox="0 0 14 14"><path d="M1 1h3v7h6v2H1z" fill="#dfe8ea"/><rect x="9" y="9" width="5" height="5" fill="#e8952a"/></svg>
        <span>PathFinder</span>
        <svg class="pf-funnel" viewBox="0 0 10 8"><path d="M0 0h10v1.500H0zM0 3h10L5 8z" fill="#eef6f7"/></svg>
        <svg class="pf-x" viewBox="0 0 10 10"><path d="M1 1l8 8M9 1 1 9" stroke="#fff" stroke-width="1.100"/></svg>
      </div>
      <div class="tree">
        <div class="row pl3"><i class="tw-d"></i><svg class="n narrow"><use href="#tree-s"/></svg><svg class="n"><use href="#tree-lock"/></svg><span class="lbl lbl-root">Sheet Metal1</span></div>
        <div class="row pl30"><svg class="n"><use href="#eye"/></svg><svg class="n"><use href="#tree-base"/></svg><span class="lbl">Base</span></div>
        <div class="row pl46"><svg class="n"><use href="#tree-mat"/></svg><span class="lbl">Material (None)</span></div>
        <div class="row pl14"><i class="tw-r"></i><svg class="n"><use href="#eyeoff"/></svg><svg class="n"><use href="#tree-ref"/></svg><span class="lbl grey">Base Reference Planes</span></div>
        <div class="row pl14"><i class="tw-d"></i><svg class="n"><use href="#eye"/></svg><svg class="n"><use href="#tree-bodies"/></svg><span class="lbl">Design Bodies</span></div>
        <div class="row pl49"><svg class="n"><use href="#eye"/></svg><svg class="n"><use href="#tree-body"/></svg><span class="lbl">Design Body</span></div>
        <div class="row pl14"><i class="tw-d"></i><div class="ordered"><span>Ordered</span><i class="ord-box"></i></div></div>
        <div class="row pl32"><i class="tw-r"></i><svg class="n flange"><use href="#tree-flange"/></svg><span class="lbl hit">Contour Flange 1</span></div>
      </div>
    </aside>

    <div class="viewport">
      <svg class="scene" viewBox="204 163 1052 500" preserveAspectRatio="none">
        <rect x="458" y="308" width="46" height="106" fill="#e9f0f2"/>
        <polygon points="439,423 498,409 499,431 442,428" fill="#16f53f"/>
        <polygon points="494,321 500,316 651,329 655,336 883,276 885,382 944,388 945,392 717,449 664,447 656,440 654,392 499,431 494,426" fill="#0fa826"/>
        <polygon points="658,438 885,381 943,388 945,392 717,449 664,447" fill="#16f53f"/>
        <polygon points="494,321 497,317 726,257 735,256 878,269 882,274 883,277 655,336 651,331 508,318" fill="#16f53f"/>
        <g fill="none" stroke="#6bff85" stroke-width="1.300">
          <path d="M497 323 508 319 651 331 655 336 883 277"/>
          <path d="M497 323 500 428M882 272 885 381"/>
          <path d="M655 336 659 439"/>
          <path d="M499 411 667 368 727 372M499 418 667 374 720 372 M500 429 727 375 729 369 725 316"/>
          <path d="M658 437 885 380"/>
        </g>
        <path d="M442 428 499 432 655 393" fill="none" stroke="#07661a" stroke-width="1" stroke-dasharray="1 1"/>
        <path d="M664 448 717 450 945 392" fill="none" stroke="#079a25" stroke-width="1"/>
        <text x="585" y="372" class="wm wm-big">SOLID</text>
        <text x="640" y="413" class="wm wm-small">YAZILIM</text>
        <text x="686" y="365" class="axis ax-z">Z</text>
        <text x="717" y="406" class="axis ax-y">Y</text>
        <text x="727" y="415" class="axis ax-x">X</text>
        <g class="navcube">
          <path d="M1172 590 1208 587 1231 588 1231 627 1208 637 1174 632z" fill="#fafcfc" stroke="#b8bcbe"/>
          <path d="M1172 590 1208 592 1231 588M1208 592 1208 637" fill="none" stroke="#b8bcbe"/>
          <text x="1177" y="615" class="cube-f" transform="rotate(3 1177 615)">FRONT</text>
          <text x="1211" y="615" class="cube-r" transform="rotate(-8 1211 615)">RIGHT</text>
          <path d="M1202 590V611" stroke="#8a84c8" stroke-width="1.500"/>
          <path d="M1202 611H1218" stroke="#c05a40"/>
          <path d="M1202 611 1212 608" stroke="#a8e060"/>
          <circle cx="1202" cy="610" r="1.500" fill="#d8c820"/>
        </g>
      </svg>
    </div>

    <aside class="dock">
      <div class="dock-head"><svg class="d"><use href="#r-family"/></svg><span class="dock-label">Family of Parts</span></div>
      <div class="dock-icons">
        <svg class="d"><use href="#r-tools"/></svg>
        <svg class="d"><use href="#r-rain"/></svg>
        <svg class="d"><use href="#r-grid"/></svg>
        <svg class="d"><use href="#r-heat"/></svg>
        <svg class="d"><use href="#r-stack"/></svg>
        <svg class="d"><use href="#r-chain"/></svg>
      </div>
    </aside>
  </main>

  <footer class="status">
    <span class="status-msg">1 items are selected</span>
    <div class="status-tools">
      <svg class="st"><use href="#s-view"/></svg>
      <svg class="st"><use href="#s-zoom"/></svg>
      <svg class="st"><use href="#s-fit"/></svg>
      <svg class="st"><use href="#s-flat"/></svg>
      <svg class="st"><use href="#s-rot"/></svg>
      <svg class="st"><use href="#s-look"/></svg>
      <svg class="st"><use href="#s-pan"/></svg>
      <svg class="st"><use href="#s-glob"/></svg>
      <svg class="st"><use href="#s-minus"/></svg>
      <div class="slider"><i class="thumb"></i></div>
      <svg class="st"><use href="#s-plus"/></svg>
      <svg class="st"><use href="#s-yt"/></svg>
      <svg class="st wide"><use href="#s-rec"/></svg>
      <svg class="st"><use href="#s-up"/></svg>
    </div>
  </footer>
  <div class="blackbar"></div>

  <div class="popup">
    <div class="pop-cell pop-on"><svg class="p"><use href="#m-edit"/></svg></div>
    <div class="pop-cell"><svg class="p"><use href="#m-sketch"/></svg></div>
    <div class="pop-cell"><svg class="p"><use href="#m-dyn"/></svg></div>
    <div class="pop-cell"><svg class="p"><use href="#m-pat"/></svg></div>
    <div class="pop-cell"><svg class="p"><use href="#m-ab"/></svg></div>
    <div class="pop-cell"><svg class="p"><use href="#m-move"/></svg></div>
    <div class="pop-cell pop-caret"><i class="caret"></i></div>
    <div class="pop-cell"><svg class="p"><use href="#m-hide"/></svg></div>
    <div class="pop-cell"><svg class="p"><use href="#m-show"/></svg></div>
    <div class="pop-cell"><svg class="p"><use href="#m-rel"/></svg></div>
    <div class="pop-cell"><svg class="p"><use href="#m-mirror"/></svg></div>
    <div class="pop-cell"><svg class="p"><use href="#m-sup"/></svg></div>
    <div class="pop-cell"><svg class="p"><use href="#m-del"/></svg></div>
  </div>
  <svg class="cursor" viewBox="0 0 18 26"><path d="M1 1V22L6 17 10 25 14 23 10 16H17z" fill="#b6ee10" stroke="#243008" stroke-width="1.400"/></svg>
</div>
</body>
</html>
```
FILE: styles.css
```css
* { box-sizing: border-box; }
html, body { margin: 0; height: 100%; }
body { font-family: Roboto, "Noto Sans", sans-serif; overflow: hidden; background: #000; }
.defs { display: none; }
i { display: block; }
.app { position: relative; width: 1280px; height: 720px; display: flex; flex-direction: column; background: #fff; }

/* title + tabs */
.titlebar { height: 26px; display: flex; align-items: center; padding-left: 5px; color: #dcebee; background: linear-gradient(90deg, #07697e 0%, #0b7186 55%, #3f92a6 100%); }
.logo { width: 21px; height: 21px; background: #34489c; border: 1.500px solid #b9c6de; color: #fff; font: bold 10px/18px "Liberation Sans", sans-serif; text-align: center; }
.qat { display: flex; align-items: center; margin-left: 16.500px; width: 243px; flex: none; }
.q { width: 17px; height: 16px; padding: 0 .5px; flex: none; }
.caret-w { width: 8px; height: 3px; flex: none; position: relative; }
.caret-w::after { content: ""; display: block; margin: 0 auto; width: 0; height: 0; border-left: 2.500px solid transparent; border-right: 2.500px solid transparent; border-top: 3px solid #e6f2f4; }
.tight { margin-left: -4px; }
.doc-title { margin-left: 226px; font-size: 10.600px; white-space: nowrap; color: #d9e8ec; }
.win-group { margin-left: auto; display: flex; align-items: center; }
.siemens { font: bold 8.500px "Liberation Sans", sans-serif; color: #dcebee; letter-spacing: .2px; }
.win-min { display: block; width: 8px; height: 2px; background: #e6f2f4; margin: 3px 0 0 14px; }
.win-restore { width: 11px; height: 11px; margin-left: 17px; }
.win-close { width: 11px; height: 11px; margin: 0 7px 0 16px; }

.tabbar { height: 20px; display: flex; align-items: center; color: #e6f2f4; font-size: 11px; background: linear-gradient(90deg, #07697e 0%, #0b7186 55%, #4796aa 100%); }
.tab { flex: none; text-align: center; height: 20px; line-height: 23px; white-space: nowrap; }
.tab-file { width: 53px; padding-left: 0; margin-left: -3px; margin-right: 3px; line-height: 20px; }
.tab-home { width: 51px; color: #a4e9c4; border-bottom: 1px solid #a4e9c4; }
.t-surf { width: 68px; } .t-pmi { width: 42px; } .t-sim { width: 74px; } .t-3d { width: 64px; }
.t-insp { width: 54px; } .t-tools { width: 50px; } .t-find { width: 58px; } .t-view { width: 50px; } .t-dm { width: 106px; }
.tab-right { margin-left: auto; display: flex; align-items: center; height: 20px; }
.search { width: 116px; height: 16px; background: #fff; display: flex; align-items: center; justify-content: space-between; padding: 0 2px 0 3px; color: #333; font-size: 9.200px; }
.search-ico { width: 12px; height: 12px; }
.face { display: block; width: 12px; height: 12px; border-radius: 50%; }
.face-y { margin-left: 36px; }
.face-o { margin-left: 5px; }
.help { width: 12px; height: 12px; border-radius: 50%; background: #d9ecf0; color: #3f92a6; font: bold 9px/12px "Liberation Sans", sans-serif; text-align: center; margin-left: 4px; }
.mini-min { display: block; width: 5px; height: 1.500px; background: #e6f2f4; margin: 2px 0 0 5px; }
.mini { width: 8px; height: 8px; margin-left: 7px; }
.mini:last-child { margin-right: 3px; }

/* ribbon */
.ribbon { height: 72px; display: flex; padding-top: 4px; background: #fff; border-top: 1px solid #d3ecef; border-bottom: 2px solid #c6c6c6; font-size: 9.100px; color: #4a4a4a; }
.group { display: flex; flex-direction: column; height: 62px; border-right: 1px solid #ebeded; flex: none; }
.items { flex: none; height: 47.500px; display: flex; }
.glabel { text-align: center; line-height: 11px; height: 11px; white-space: nowrap; padding-left: 4px; }
.g-clip { width: 73px; } .g-sel { width: 71px; } .g-planes { width: 32px; } .g-sketch { width: 213px; }
.g-sheet { width: 361px; } .g-pat { width: 81px; } .g-mod { width: 196px; } .g-dim { width: 46px; }
.g-part { width: 72px; } .g-orient { width: 38px; } .g-style { width: 36px; }
.lg { display: flex; flex-direction: column; align-items: center; flex: none; line-height: 9.500px; white-space: nowrap; }
.lg span { display: flex; align-items: center; }
.ico { width: 30px; height: 29.300px; flex: none; }
.muted { color: #aaa; }
.w25 { width: 25px; } .w28 { width: 28px; } .w30 { width: 30px; } .w31 { width: 31px; } .w33 { width: 33px; } .w34 { width: 34px; }
.w36 { width: 36px; } .w40 { width: 40px; } .w42 { width: 42px; } .w43 { width: 43px; } .w44 { width: 44px; } .w45 { width: 45px; }
.w46 { width: 46px; } .w48 { width: 48px; } .grow { flex: 1; }
.ml6 { margin-left: 6px; } .ml4 { margin-left: 4px; }
.sub { border-right: 1px solid #ebeded; }
.caret { width: 0; height: 0; border-left: 2.500px solid transparent; border-right: 2.500px solid transparent; border-top: 3px solid #333; margin-top: 3px; flex: none; }
.caret.in { margin: 0 0 0 3px; }
.col { display: flex; flex-direction: column; flex: none; }
.sm { height: 16.600px; display: flex; align-items: center; justify-content: center; flex: none; }
.sm .caret { margin: 0 0 0 3px; }
.sm .caret.tiny { margin-left: -3px; }
.s { width: 15px; height: 15px; flex: none; }
.sm.txt { justify-content: flex-start; white-space: nowrap; }
.sm.txt .caret.gap { margin-left: 6px; }
.sel-on { background: #d6e8ec; width: 35px; margin-left: 6px; height: 50px; }
.sm.on { background: #e6f0f2; }
.g-sel .w25 { margin-left: 1px; }
.tool .lg { padding: 3px 0 0 3px; }
.tool-ico { width: 16px; height: 16px; flex: none; margin-bottom: 9px; }
.tool-gap { height: 25px; flex: none; }

/* prompt */
.prompt { height: 17px; display: flex; align-items: stretch; background: #fff; }
.prompt-ico { width: 25px; background: #0f7186; display: flex; align-items: center; justify-content: center; }
.prompt-ico svg { width: 14px; height: 8px; }
.prompt-text { padding-left: 1.500px; font-size: 11.450px; line-height: 16px; color: #222; white-space: nowrap; }

/* document strip */
.docstrip { height: 28px; display: flex; align-items: flex-end; padding-left: 2px; background: #fff; border-bottom: 1px solid #0f7186; flex: none; margin-right: 24px; }
.doctab { width: 108px; height: 21px; background: #0f7186; display: flex; align-items: center; color: #dcebee; font-size: 10px; padding-left: 13px; }
.doctab-ico { width: 13px; height: 13px; margin-right: 1px; }
.doctab-x { width: 8px; height: 8px; margin-left: 11px; }
.docnav { margin-left: auto; height: 22px; padding-bottom: 1px; display: flex; align-items: center; }
.tri-l, .tri-r, .tri-d { width: 0; height: 0; border: 3px solid transparent; }
.tri-l { border-right: 3.500px solid #888; border-left: 0; }
.tri-r { border-left: 3.500px solid #888; border-right: 0; margin-left: 8px; }
.tri-d { border-top: 4px solid #222; border-bottom: 0; margin-left: 9px; }
.docnav-x { width: 8px; height: 8px; margin: 0 3px 0 5px; }

/* main: the dock on the right starts under the ribbon, beside prompt and tab strip */
.main { flex: 1; min-height: 0; display: flex; margin-top: -46px; }
.pathfinder { width: 204px; margin-top: 46px; flex: none; border-left: 1px solid #0f7186; border-right: 1px solid #0f7186; display: flex; flex-direction: column; background: #fff; }
.pf-head { height: 17px; margin-left: -1px; margin-right: -1px; background: #0f7186; color: #d9ecf0; display: flex; align-items: center; font-size: 10px; padding-left: 4px; flex: none; }
.pf-ico { width: 14px; height: 14px; margin-right: 5px; }
.pf-funnel { width: 9px; height: 7px; margin-left: auto; }
.pf-x { width: 8px; height: 8px; margin: 0 6px 0 7px; }
.tree { padding-top: 2px; font-size: 9px; color: #333; }
.row { height: 16px; display: flex; align-items: center; white-space: nowrap; }
.pl3 { padding-left: 4px; } .pl14 { padding-left: 13px; } .pl30 { padding-left: 29px; } .pl32 { padding-left: 32px; } .pl46 { padding-left: 45px; } .pl49 { padding-left: 48px; }
.n { width: 16px; height: 13px; flex: none; }
.narrow { width: 14px; }
.lbl { margin-left: 3px; }
.lbl-root { margin-left: 2px; }
.grey { color: #8a8a8a; }
.tw-d, .tw-r { width: 16px; height: 8px; flex: none; position: relative; }
.tw-d::after { content: ""; position: absolute; left: 3px; top: 1.500px; border-left: 4px solid transparent; border-right: 4px solid transparent; border-top: 5px solid #333; }
.tw-r::after { content: ""; position: absolute; left: 5px; top: 0; border-top: 4px solid transparent; border-bottom: 4px solid transparent; border-left: 5px solid #333; }
.pl3 .tw-d { width: 13px; }
.ordered { width: 153px; height: 12px; margin-left: 2px; background: #f5cf92; display: flex; align-items: center; justify-content: space-between; padding: 0 3px; line-height: 11px; }
.ord-box { width: 8px; height: 8px; background: #f9e2bd; border: 1px solid #f0d5a8; }
.flange { width: 20px; margin-left: 15px; }
.hit { background: #1bf03f; color: #145020; padding: 0 2px 0 2px; margin-left: -1px; width: 75px; height: 12px; line-height: 12px; text-align: center; }

.viewport { flex: 1; margin-top: 47px; background: #f7fbfb; min-width: 0; }
.scene { display: block; width: 100%; height: 100%; }
.wm { font-family: "Noto Sans", sans-serif; fill: #000; opacity: .045; }
.wm-big { font-size: 82px; }
.wm-small { font-size: 26px; letter-spacing: 2px; }
.axis { font: 10px "Liberation Sans", sans-serif; }
.ax-z { fill: #155c8c; } .ax-y { fill: #9fe66c; } .ax-x { fill: #b5482a; }
.cube-f { font: 8px "Liberation Sans", sans-serif; fill: #666; }
.cube-r { font: 6px "Liberation Sans", sans-serif; fill: #666; }

.dock { width: 24px; flex: none; display: flex; flex-direction: column; align-items: center; background: #fff; padding-left: 4px; }
.dock-head { display: flex; flex-direction: column; align-items: center; padding-top: 6px; height: 120px; }
.dock-label { writing-mode: vertical-rl; font: 9.800px "Liberation Sans", sans-serif; color: #333; margin-top: 3px; }
.d { width: 16px; height: 16px; flex: none; }
.dock-icons { display: flex; flex-direction: column; gap: 13.300px; }

/* status */
.status { height: 17px; background: #0f7186; display: flex; align-items: center; color: #e6f2f4; font-size: 9.900px; padding-left: 778px; flex: none; }
.status-msg { width: 170px; white-space: nowrap; padding-top: 1px; }
.status-tools { display: flex; align-items: center; }
.st { width: 12px; height: 12px; margin: 0 3px; flex: none; }
.st.wide { margin: 0 5px 0 5px; }
.slider { width: 93px; height: 1px; background: #e6f2f4; margin: 0 1px; position: relative; }
.thumb { position: absolute; left: 7px; top: -4px; width: 5px; height: 9px; border-radius: 2px; background: #f2f2f2; }
.blackbar { height: 40px; background: #000; flex: none; }

/* floating toolbar + cursor */
.popup { position: absolute; left: 126px; top: 229px; width: 172px; height: 55px; background: #fff; border: 1px solid #dcdcdc; box-shadow: 0 0 2px rgba(0,0,0,.12); padding: 1px 0 0 7px; display: grid; grid-template-columns: repeat(6, 25.300px) 10px; grid-template-rows: 26px 26px; justify-items: center; align-items: center; }
.p { display: block; width: 18px; height: 18px; }
.pop-on { background: #e4eef0; width: 24px; height: 24px; display: flex; align-items: center; justify-content: center; }
.pop-caret { display: flex; align-items: center; }
.m-abtxt { font: 8px "Liberation Sans", sans-serif; fill: #555; }
.cursor { position: absolute; left: 143px; top: 246px; width: 18px; height: 26px; }
```
